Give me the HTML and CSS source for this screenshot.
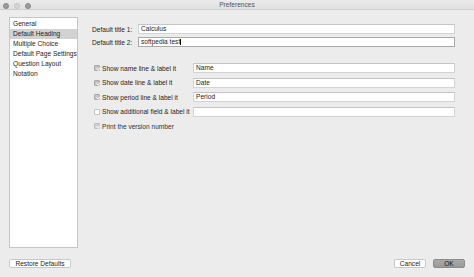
FILE: index.html
```html
<!DOCTYPE html>
<html lang="en">
<head>
    <meta charset="UTF-8">
    <title>Preferences</title>
    <link rel="stylesheet" href="styles.css">
</head>
<body>
    <div class="window">
        <div class="titlebar">
            <div class="lights">
                <span class="light dark"></span>
                <span class="light"></span>
                <span class="light dark"></span>
            </div>
            <div class="title">Preferences</div>
        </div>

        <div class="main">
            <ul class="sidebar">
                <li>General</li>
                <li class="selected">Default Heading</li>
                <li>Multiple Choice</li>
                <li>Default Page Settings</li>
                <li>Question Layout</li>
                <li>Notation</li>
            </ul>

            <div class="content">
                <div class="titles">
                    <label>Default title 1:</label>
                    <div class="field">Calculus</div>
                    <label>Default title 2:</label>
                    <div class="field focused">softpedia test<span class="caret"></span></div>
                </div>

                <div class="checks">
                    <label class="check"><span class="box on"></span>Show name line &amp; label it</label>
                    <div class="field">Name</div>
                    <label class="check"><span class="box on"></span>Show date line &amp; label it</label>
                    <div class="field">Date</div>
                    <label class="check"><span class="box on"></span>Show period line &amp; label it</label>
                    <div class="field">Period</div>
                    <label class="check"><span class="box"></span>Show additional field &amp; label it</label>
                    <div class="field"></div>
                    <label class="check full"><span class="box on faded"></span>Print the version number</label>
                </div>
            </div>
        </div>

        <div class="footer">
            <button class="btn">Restore Defaults</button>
            <div class="spacer"></div>
            <button class="btn small">Cancel</button>
            <button class="btn small default">OK</button>
        </div>
    </div>
</body>
</html>
```

FILE: styles.css
```css
body {
    margin: 0;
    background: #ececec;
    font-family: "Liberation Sans", Arial, sans-serif;
    font-size: 6.6px;
    color: #1e1e1e;
}

.window {
    width: 474px;
    height: 277px;
    display: flex;
    flex-direction: column;
    background: #ececec;
}

.titlebar {
    height: 10px;
    border-bottom: 1px solid #cfcfcf;
    background: linear-gradient(#ebebeb, #e0e0e0);
    position: relative;
    display: flex;
    align-items: center;
    justify-content: center;
}

.lights {
    position: absolute;
    left: 3px;
    top: 3px;
    display: flex;
    gap: 5px;
}

.light {
    width: 4px;
    height: 4px;
    border-radius: 50%;
    background: #d6d6d6;
    border: 0.5px solid #c4c4c4;
}

.light.dark {
    background: #9a9a9a;
    border-color: #888;
}

.title {
    color: #555;
}

.main {
    flex: 1;
    display: flex;
    align-items: flex-start;
}

.sidebar {
    list-style: none;
    margin: 7px 0 0 9px;
    padding: 1px 0 0;
    width: 67px;
    height: 228px;
    background: #fff;
    border: 1px solid #c6c6c6;
}

.sidebar li {
    height: 10px;
    line-height: 10px;
    padding-left: 3px;
    white-space: nowrap;
}

.sidebar li.selected {
    background: #d2d2d2;
}

.content {
    flex: 1;
    margin-left: 14px;
    padding: 14px 19px 0 0;
}

.titles {
    display: grid;
    grid-template-columns: 46px 1fr;
    grid-auto-rows: 10px;
    row-gap: 3px;
    align-items: center;
}

.field {
    height: 10px;
    box-sizing: border-box;
    background: #fff;
    border: 1px solid #d3d3d3;
    border-top-color: #c4c4c4;
    padding-left: 2px;
    line-height: 8px;
    white-space: nowrap;
}

.field.focused {
    border: 1.5px solid #a9a9a9;
    line-height: 7px;
}

.caret {
    display: inline-block;
    width: 0.5px;
    height: 6px;
    background: #000;
    vertical-align: middle;
}

.checks {
    margin-top: 16px;
    display: grid;
    grid-template-columns: 101px 1fr;
    grid-auto-rows: 10px;
    row-gap: 4.5px;
    align-items: center;
}

.check {
    display: flex;
    align-items: center;
    padding-left: 2px;
    white-space: nowrap;
}

.check.full {
    grid-column: 1 / 3;
    color: #333;
}

.box {
    width: 6px;
    height: 6px;
    box-sizing: border-box;
    margin-right: 2px;
    border: 0.5px solid #c2c2c2;
    border-radius: 1px;
    background: #fff;
    position: relative;
}

.box.on {
    background: #c4c4c4;
    border-color: #a8a8a8;
}

.box.on::after {
    content: "";
    position: absolute;
    left: 1.5px;
    top: 0.3px;
    width: 1.5px;
    height: 3px;
    border: solid #f4f4f4;
    border-width: 0 1px 1px 0;
    transform: rotate(40deg);
}

.box.faded {
    background: #d0d0d0;
    border-color: #bdbdbd;
}

.footer {
    display: flex;
    align-items: center;
    padding: 11px 9px 9px;
}

.spacer {
    flex: 1;
}

.btn {
    height: 9px;
    width: 62px;
    padding: 0;
    border: 0.5px solid #c8c8c8;
    border-radius: 2px;
    background: #fff;
    font-family: "Liberation Sans", Arial, sans-serif;
    font-size: 6.6px;
    line-height: 8px;
    color: #1e1e1e;
}

.btn.small {
    width: 32px;
    margin-left: 7px;
}

.btn.default {
    background: linear-gradient(#a9a9a9, #9a9a9a);
    border-color: #8c8c8c;
    color: #111;
}
```
